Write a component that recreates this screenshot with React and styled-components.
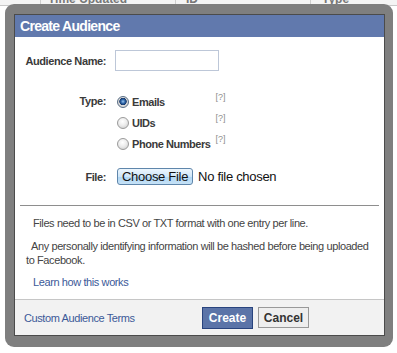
import React from "react";
import styled, { createGlobalStyle } from "styled-components";

const GlobalStyle = createGlobalStyle`
  html, body { margin: 0; padding: 0; background: #fff; }
  body { font-family: "Liberation Sans", Arial, sans-serif; }
  * { box-sizing: border-box; }
`;

const Page = styled.div`
  position: relative;
  width: 397px;
  height: 353px;
  overflow: hidden;
  background: #fff;
`;

const TableHeader = styled.div`
  display: grid;
  grid-template-columns: 40px 135px 135px 1fr;
  height: 17px;
  margin-top: -11px;
  background: #f4f4f4;
  border-bottom: 1px solid #c8c8c8;
`;

const HeaderCell = styled.div`
  display: flex;
  align-items: flex-end;
  padding-left: ${(p) => p.$pad || 7}px;
  border-left: ${(p) => (p.$first ? "none" : "1px solid #cfcfcf")};
  font-size: 12px;
  line-height: 12px;
  font-weight: bold;
  color: #777;
`;

const Overlay = styled.div`
  position: absolute;
  left: 5px;
  top: 4px;
  width: 388px;
  height: 343px;
  padding: 10px 8px 11px 9px;
  background: #7f7f7f;
  border-radius: 9px;
`;

const Dialog = styled.div`
  display: flex;
  flex-direction: column;
  height: 100%;
  background: #fff;
  border: 1px solid #4b4b4b;
`;

const TitleBar = styled.div`
  display: flex;
  align-items: center;
  height: 22px;
  padding-left: 5px;
  background: #6179ad;
  color: #fff;
  font-size: 14px;
  font-weight: bold;
  letter-spacing: -0.7px;
`;

const Body = styled.div`
  flex: 1;
  padding-top: 13px;
`;

const FormRow = styled.div`
  display: grid;
  grid-template-columns: 91px 1fr;
  column-gap: 9px;
  align-items: ${(p) => p.$align || "center"};
  margin-top: ${(p) => p.$top || 0}px;
`;

const Label = styled.label`
  justify-self: end;
  font-size: 11px;
  font-weight: bold;
  letter-spacing: -0.4px;
  color: #3a3a3a;
  line-height: ${(p) => p.$lh || 14}px;
`;

const TextInput = styled.input`
  width: 104px;
  height: 21px;
  border: 1px solid #bdc7d8;
  padding: 2px 3px;
  font-size: 11px;
  font-family: inherit;
  outline: none;
`;

const RadioGrid = styled.div`
  display: grid;
  grid-template-columns: auto auto;
  grid-auto-rows: 21px;
  justify-content: start;
  column-gap: 5px;
`;

const RadioOption = styled.label`
  display: flex;
  align-items: center;
  gap: 3px;
  padding-left: 2px;
  font-size: 11px;
  font-weight: bold;
  letter-spacing: -0.45px;
  color: #3a3a3a;
`;

const RadioDot = styled.span`
  width: 12px;
  height: 12px;
  border-radius: 50%;
  border: 1px solid ${(p) => (p.$checked ? "#5a6f86" : "#9a9a9a")};
  background: ${(p) =>
    p.$checked
      ? "radial-gradient(circle at 50% 45%, #9cc6ef 0, #2d65a8 2px, #17386a 3.4px, #dcdcdc 4px, #c2c2c2 100%)"
      : "radial-gradient(circle at 45% 35%, #ffffff 0, #ededed 45%, #c8c8c8 100%)"};
  flex: none;
`;

const Help = styled.span`
  align-self: center;
  margin-top: -8px;
  font-size: 9px;
  color: #8f8f8f;
  line-height: 1;
`;

const FileControl = styled.div`
  display: flex;
  align-items: center;
  gap: 5px;
  padding-left: 2px;
  font-size: 13px;
  letter-spacing: -0.3px;
  color: #111;
`;

const FileButton = styled.span`
  display: inline-flex;
  align-items: center;
  height: 17px;
  padding: 0 4px;
  border: 1px solid #5f86ab;
  border-radius: 3px;
  background: linear-gradient(#edf6fd, #cfe6f8 50%, #b0d6f3 52%, #c6e2f7);
  font-size: 13px;
  color: #111;
`;

const Separator = styled.hr`
  margin: 20px 5px 0 5px;
  border: none;
  border-top: 1px solid #8e8e8e;
  height: 0;
`;

const Info = styled.div`
  padding: 10px 10px 0 11px;
  font-size: 11px;
  line-height: 14px;
  letter-spacing: -0.4px;
  color: #444;
  white-space: nowrap;
`;

const Para = styled.p`
  margin: ${(p) => p.$top || 0}px 0 0;
  text-indent: ${(p) => p.$indent || 0}px;
`;

const Link = styled.a`
  color: #3b5998;
  text-decoration: none;
  font-size: 11px;
  letter-spacing: -0.4px;
`;

const Footer = styled.div`
  display: flex;
  align-items: center;
  justify-content: space-between;
  height: 36px;
  padding: 0 75px 0 9px;
  border-top: 1px solid #c6c6c6;
  background: #f2f2f2;
`;

const Buttons = styled.div`
  display: flex;
  align-items: center;
  gap: 5px;
`;

const Button = styled.button`
  width: 51px;
  height: ${(p) => (p.$primary ? 22 : 21)}px;
  padding: 0;
  border: 1px solid ${(p) => (p.$primary ? "#29447e" : "#999")};
  background: ${(p) => (p.$primary ? "#5b74a8" : "#eeeeee")};
  color: ${(p) => (p.$primary ? "#fff" : "#333")};
  font-family: inherit;
  font-size: 12px;
  font-weight: bold;
`;

export default function App() {
  return (
    <Page>
      <GlobalStyle />
      <TableHeader>
        <HeaderCell $first />
        <HeaderCell>Time Updated</HeaderCell>
        <HeaderCell $pad={10}>ID</HeaderCell>
        <HeaderCell $pad={11}>Type</HeaderCell>
      </TableHeader>
      <Overlay>
        <Dialog>
          <TitleBar>Create Audience</TitleBar>
          <Body>
            <FormRow>
              <Label>Audience Name:</Label>
              <TextInput type="text" />
            </FormRow>
            <FormRow $align="start" $top={20}>
              <Label $lh={21}>Type:</Label>
              <RadioGrid>
                <RadioOption>
                  <RadioDot $checked />
                  Emails
                </RadioOption>
                <Help>[?]</Help>
                <RadioOption>
                  <RadioDot />
                  UIDs
                </RadioOption>
                <Help>[?]</Help>
                <RadioOption>
                  <RadioDot />
                  Phone Numbers
                </RadioOption>
                <Help>[?]</Help>
              </RadioGrid>
            </FormRow>
            <FormRow $top={14}>
              <Label>File:</Label>
              <FileControl>
                <FileButton>Choose File</FileButton>
                No file chosen
              </FileControl>
            </FormRow>
            <Separator />
            <Info>
              <Para $indent={7}>
                Files need to be in CSV or TXT format with one entry per line.
              </Para>
              <Para $indent={5} $top={9}>
                Any personally identifying information will be hashed before
                being uploaded
                <br />
                to Facebook.
              </Para>
              <Para $indent={7} $top={8}>
                <Link href="#">Learn how this works</Link>
              </Para>
            </Info>
          </Body>
          <Footer>
            <Link href="#">Custom Audience Terms</Link>
            <Buttons>
              <Button $primary>Create</Button>
              <Button>Cancel</Button>
            </Buttons>
          </Footer>
        </Dialog>
      </Overlay>
    </Page>
  );
}
